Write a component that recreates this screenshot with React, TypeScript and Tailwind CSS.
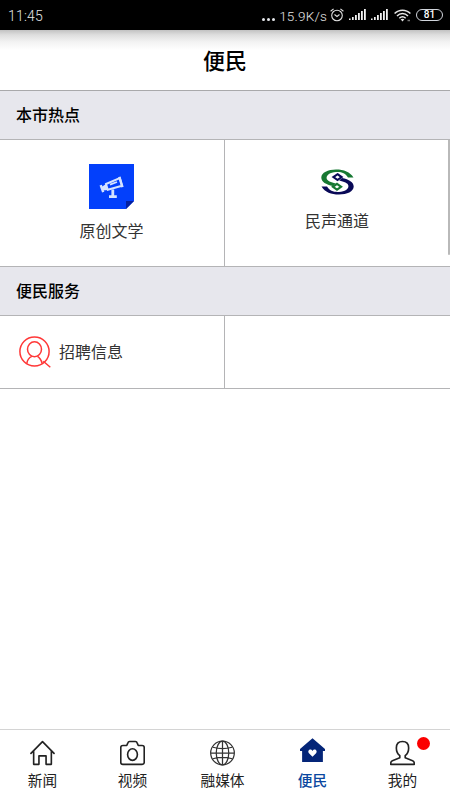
import React from "react";

interface Tab {
  label: string;
  icon: React.ReactNode;
  active?: boolean;
  dot?: boolean;
}

const SignalIcon = () => (
  <svg width="17" height="12" viewBox="0 0 17 12" fill="#f2f2f2">
    <rect x="0" y="9.5" width="1.6" height="1.5" />
    <rect x="3" y="8" width="1.7" height="3" />
    <rect x="6" y="6" width="1.8" height="5" />
    <rect x="9" y="4" width="1.8" height="7" />
    <rect x="12" y="2" width="1.8" height="9" />
    <rect x="15" y="0" width="1.8" height="11" />
  </svg>
);

const AlarmIcon = () => (
  <svg width="14" height="14" viewBox="0 0 14 14" fill="none" stroke="#e0e0e0" strokeWidth="1.1">
    <circle cx="7" cy="7.5" r="5.3" />
    <path d="M0.6 3.3 3.6 0.9M13.4 3.3 10.4 0.9M4.5 6.5 7 8.5 9.5 6.5" />
  </svg>
);

const WifiIcon = () => (
  <svg width="17" height="13" viewBox="0 0 17 13" fill="none" stroke="#e8e8e8" strokeWidth="1.5">
    <path d="M0.6 4.5C5 0 12 0 16.4 4.5M3 7C6.2 3.8 10.8 3.8 14 7M5.3 9.3C7.3 7.4 9.7 7.4 11.7 9.3" />
    <path d="M6.6 10.3Q8.5 9 10.4 10.3L8.5 12.5Z" fill="#e8e8e8" stroke="none" />
    <path d="M13.5 11.5H16" stroke="#777" strokeWidth="1.5" />
  </svg>
);

const TelescopeIcon = () => (
  <svg width="45" height="45" viewBox="0 0 45 45">
    <path d="M0 0H45V37L37 45H0Z" fill="#0340fb" />
    <path d="M37 37H45L37 45Z" fill="#0420a0" />
    <g fill="none" stroke="#d5e3ff" strokeWidth="2">
      <path d="M17 20 30.8 14.2 33 21.8 18.8 25.8Z" />
      <path d="M21 20.7 28 18" strokeWidth="1.8" />
      <path d="M30.3 12.8 33.5 23.2" strokeWidth="2.4" />
      <path d="M11.7 21.2 14.2 28.2" strokeWidth="2.4" />
      <path d="M12.5 23 17 20 19 26 14 26.5Z" fill="#d5e3ff" stroke="none" />
      <path d="M23.8 25.5V32M20 32.6H27.8" strokeWidth="2.8" />
    </g>
  </svg>
);

const ChannelLogo = () => (
  <svg width="33" height="26" viewBox="0 0 33 26">
    <path
      d="M32.5 8.5H27C24.5 3.8 20 2.6 15 3C9 3.4 5.3 6 5.6 9.3C6 12.3 10 13 14.8 14.5L12 17C5 15.5 0.3 13 0.3 8.5C0.3 3.5 7 0.4 15 0.4C23 0.4 29 2.7 32.5 8.5Z"
      fill="#177832"
    />
    <path
      d="M0.5 17.5H6C8.5 21.8 13 23.2 18 22.9C24 22.5 27.8 20 27.4 16.7C27 13.7 23 13 18.2 11.5L21 9C28 10.5 32.7 13 32.7 17.5C32.7 22.5 26 25.5 18 25.5C10 25.5 4 23.3 0.5 17.5Z"
      fill="#090957"
    />
    <path d="M16.5 5.2 20.6 8.1 16.5 11 12.4 8.1Z" fill="none" stroke="#090957" strokeWidth="2.1" />
    <path d="M16 14.9 20.1 17.8 16 20.7 11.9 17.8Z" fill="none" stroke="#177832" strokeWidth="2.1" />
  </svg>
);

const RecruitIcon = () => (
  <svg width="32" height="32" viewBox="0 0 32 32" fill="none" stroke="#ff3737" strokeWidth="1.5">
    <circle cx="15.5" cy="15.5" r="14.6" />
    <ellipse cx="15.5" cy="13.3" rx="7" ry="7.5" />
    <path d="M12.8 20.4C10 21.6 8.4 23.5 7.8 27.6M18.5 20.4C19.3 21 20.4 21.8 21.2 23M24.3 25.2 31.3 31.3M20.8 22.5C22 24 22.8 25.5 23.2 27.5" />
  </svg>
);

const HomeIcon = () => (
  <svg width="25" height="26" viewBox="0 0 26 26" fill="none" stroke="#222" strokeWidth="1.7" strokeLinejoin="round" strokeLinecap="round">
    <path d="M1 13.4 13 1.2 25 13.4M3.8 11V24.8H9.3V16H16.7V24.8H22.2V11" />
  </svg>
);

const CameraIcon = () => (
  <svg width="25" height="26" viewBox="0 0 26 26" fill="none" stroke="#222" strokeWidth="1.7" strokeLinejoin="round">
    <path d="M3 5.2H7L8.2 2.4Q8.6 1 10 1H16Q17.4 1 17.8 2.4L19 5.2H23Q25.2 5.2 25.2 7.2V22.8Q25.2 24.8 23 24.8H3Q0.8 24.8 0.8 22.8V7.2Q0.8 5.2 3 5.2Z" />
    <ellipse cx="13" cy="14.6" rx="5.1" ry="6" />
  </svg>
);

const GlobeIcon = () => (
  <svg width="25" height="26" viewBox="0 0 26 26" fill="none" stroke="#333" strokeWidth="1.3">
    <circle cx="13" cy="13" r="12.3" />
    <ellipse cx="13" cy="13" rx="6.5" ry="12.3" />
    <path d="M13 1V25M1 13H25M3 7Q13 10 23 7M3 19Q13 16 23 19" />
  </svg>
);

const ServiceIcon = () => (
  <svg width="25" height="26" viewBox="0 0 26 26" className="overflow-visible">
    <path d="M13 -2.4 26 8.8V11H23.8V22.3H2.2V11H0V8.8Z" fill="#042578" />
    <path d="M13 17 9.3 13.2C7.2 10.3 11 7.6 13 10.8C15 7.6 18.8 10.3 16.7 13.2Z" fill="#fff" />
  </svg>
);

const UserIcon = () => (
  <svg width="25" height="26" viewBox="0 0 26 26" fill="none" stroke="#222" strokeWidth="1.7" strokeLinejoin="round">
    <path d="M10.2 15.8C7.4 13.5 6.6 10.7 6.6 7.7C6.6 3.6 9 1 13 1C17 1 19.4 3.6 19.4 7.7C19.4 10.7 18.6 13.5 15.8 15.8V18L23.5 21Q25 21.7 25.2 23.2V24.8H0.8V23.2Q1 21.7 2.5 21L10.2 18Z" />
  </svg>
);

const tabs: Tab[] = [
  { label: "新闻", icon: <HomeIcon /> },
  { label: "视频", icon: <CameraIcon /> },
  { label: "融媒体", icon: <GlobeIcon /> },
  { label: "便民", icon: <ServiceIcon />, active: true },
  { label: "我的", icon: <UserIcon />, dot: true },
];

const StatusBar = () => (
  <div className="flex h-[30px] shrink-0 items-center justify-between bg-black pl-2 pr-[7px] font-[Roboto,sans-serif] text-[14px] font-light text-[#e4e4e4]">
    <span className="pt-[2px] tracking-[0.2px]">11:45</span>
    <div className="flex items-center">
      <div className="mr-[4px] mt-[8px] flex gap-[2px]">
        <span className="size-[3px] rounded-full bg-gray-200" />
        <span className="size-[3px] rounded-full bg-gray-200" />
        <span className="size-[3px] rounded-full bg-gray-200" />
      </div>
      <span className="mr-[3px] pt-[2px] text-[13.5px] tracking-[0.2px]">15.9K/s</span>
      <AlarmIcon />
      <div className="ml-[5px] mr-[6px] flex gap-[5px]">
        <SignalIcon />
        <SignalIcon />
      </div>
      <WifiIcon />
      <span className="ml-[5px] flex h-[12px] w-[27px] items-center justify-center rounded-full border border-gray-300 text-[10px] font-medium leading-none text-white">
        81
      </span>
    </div>
  </div>
);

const SectionTitle = ({ children }: { children: React.ReactNode }) => (
  <h2 className="flex h-[49px] shrink-0 items-center border-b border-[#b4b4b6] bg-[#e7e7ed] pb-[2px] pl-4 text-[16px] font-medium text-black">
    {children}
  </h2>
);

const App: React.FC = () => {
  return (
    <div className="flex h-[800px] w-[450px] flex-col overflow-hidden bg-white font-['Noto_Sans_CJK_SC',sans-serif] text-[#333]">
      <StatusBar />
      <header className="flex h-[61px] shrink-0 items-center justify-center border-b border-[#a9a9ab] bg-[linear-gradient(to_bottom,#c2c2c2_0,#dedede_5px,#f3f3f3_12px,#fff_20px)] pb-[2px] text-[22px] font-medium text-black">
        便民
      </header>

      <main className="flex-1">
        <SectionTitle>本市热点</SectionTitle>
        <div className="relative flex h-[127px] border-b border-[#b4b4b6]">
          <div className="flex w-[225px] flex-col items-center border-r border-[#b4b4b6] pr-px pt-[24px]">
            <TelescopeIcon />
            <span className="mt-[9px] text-[16px] leading-6">原创文学</span>
          </div>
          <div className="flex flex-1 flex-col items-center pr-px pt-[29px]">
            <ChannelLogo />
            <span className="mt-[13px] text-[16px] leading-6">民声通道</span>
          </div>
          {/* scrollbar */}
          <div className="absolute right-0 top-0 h-[115px] w-[2px] rounded-b bg-[#b9b9b9]" />
        </div>

        <SectionTitle>便民服务</SectionTitle>
        <div className="flex h-[73px] border-b border-[#b4b4b6]">
          <div className="flex w-[225px] items-center border-r border-[#b4b4b6] pl-[19px]">
            <RecruitIcon />
            <span className="ml-2 pb-[2px] text-[16px] leading-6">招聘信息</span>
          </div>
        </div>
      </main>

      <nav className="h-[71px] shrink-0 border-t border-[#d4d4d4]">
        <div className="-ml-[2.5px] grid w-[450px] grid-cols-5">
          {tabs.map((tab) => (
            <div key={tab.label} className="relative flex flex-col items-center pt-[10px]">
              {tab.icon}
              <span
                className={
                  tab.active
                    ? "mt-[4px] text-[14.7px] leading-5 font-medium text-[#0a47a0]"
                    : "mt-[4px] text-[14.7px] leading-5 text-[#222]"
                }
              >
                {tab.label}
              </span>
              {tab.dot && <span className="absolute left-[59px] top-[7px] size-[13px] rounded-full bg-[#fb0000]" />}
            </div>
          ))}
        </div>
      </nav>
    </div>
  );
};

export default App;
